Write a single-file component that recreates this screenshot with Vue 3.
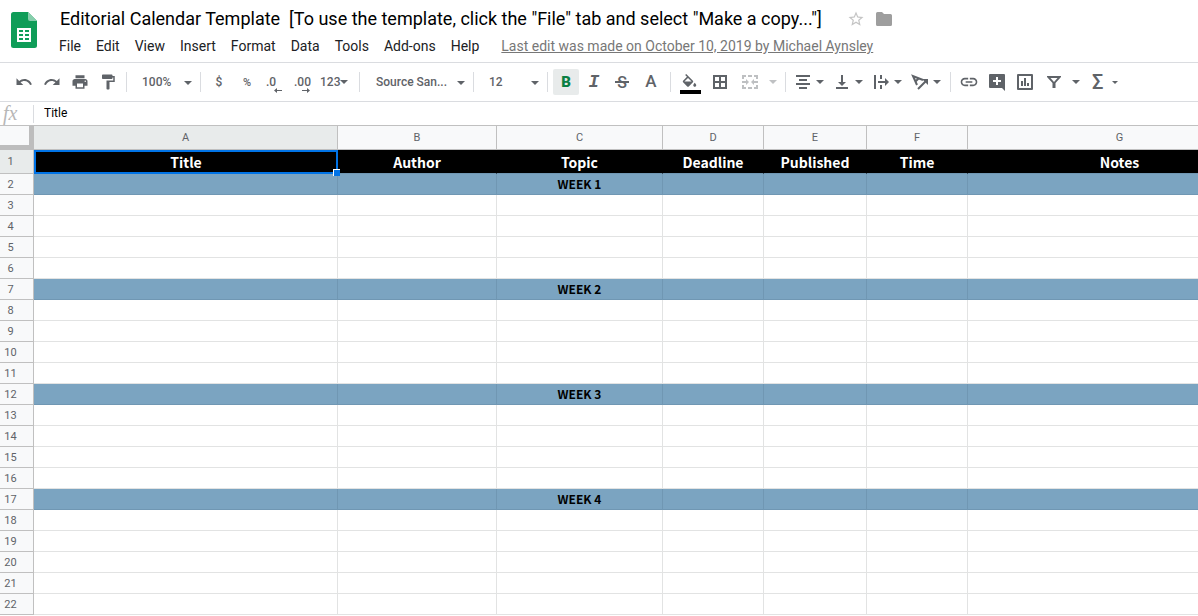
<script setup>
import { ref } from 'vue'

const formula = ref('Title')
const zoom = ref('100%')
const family = ref('Source San...')
const size = ref('12')

const menus = ['File', 'Edit', 'View', 'Insert', 'Format', 'Data', 'Tools', 'Add-ons', 'Help']

const history = [
  { label: 'Undo', path: 'M12.5 8c-2.65 0-5.05.99-6.9 2.6L2 7v9h9l-3.62-3.62c1.39-1.16 3.16-1.88 5.12-1.88 3.54 0 6.55 2.31 7.6 5.5l2.37-.78C21.08 11.03 17.15 8 12.5 8z' },
  { label: 'Redo', path: 'M18.4 10.6C16.55 8.99 14.15 8 11.5 8c-4.65 0-8.58 3.03-9.96 7.22L3.9 16c1.05-3.19 4.05-5.5 7.6-5.5 1.95 0 3.73.72 5.12 1.88L13 16h9V7l-3.6 3.6z' },
  { label: 'Print', path: 'M19 8H5c-1.66 0-3 1.34-3 3v6h4v4h12v-4h4v-6c0-1.66-1.34-3-3-3zm-3 11H8v-5h8v5zm3-7c-.55 0-1-.45-1-1s.45-1 1-1 1 .45 1 1-.45 1-1 1zm-1-9H6v4h12V3z' },
  { label: 'Paint format', path: 'M18 4V3c0-.55-.45-1-1-1H5c-.55 0-1 .45-1 1v4c0 .55.45 1 1 1h12c.55 0 1-.45 1-1V6h1v4h-9v11c0 .55.45 1 1 1h2c.55 0 1-.45 1-1v-9h7V4h-3z' },
]

const arrange = [
  { label: 'Horizontal align', path: 'M2 2h14v2H2zM5 6h8v2H5zM2 10h14v2H2zM5 14h8v2H5z' },
  { label: 'Vertical align', path: 'M3 14h12v2H3zM8 2h2v7h3l-4 4-4-4h3z' },
  { label: 'Text wrapping', path: 'M2 2h2v14H2zM8 2h2v4H8zM8 12h2v4H8zM6 8h7V5l4 4-4 4v-3H6z' },
]

const insert = [
  { label: 'Insert link', box: '0 0 24 24', size: 20, path: 'M3.9 12c0-1.71 1.39-3.1 3.1-3.1h4V7H7c-2.76 0-5 2.24-5 5s2.24 5 5 5h4v-1.9H7c-1.71 0-3.1-1.39-3.1-3.1zM8 13h8v-2H8v2zm9-6h-4v1.9h4c1.71 0 3.1 1.39 3.1 3.1s-1.39 3.1-3.1 3.1h-4V17h4c2.76 0 5-2.24 5-5s-2.24-5-5-5z' },
  { label: 'Insert comment', box: '0 0 18 18', size: 18, path: 'M2 1h14q1 0 1 1v16l-3-3H2q-1 0-1-1V2q0-1 1-1zM8 4v3H5v2h3v3h2V9h3V7h-3V4z' },
  { label: 'Insert chart', box: '0 0 18 18', size: 18, path: 'M2 1h14q1 0 1 1v14q0 1-1 1H2q-1 0-1-1V2q0-1 1-1zM3 3v12h12V3zM5 8h2v5H5zM8 5h2v8H8zM11 10h2v3h-2z' },
]

const columns = [
  { id: 'A', head: 'Title' },
  { id: 'B', head: 'Author' },
  { id: 'C', head: 'Topic' },
  { id: 'D', head: 'Deadline' },
  { id: 'E', head: 'Published' },
  { id: 'F', head: 'Time' },
  { id: 'G', head: 'Notes' },
]

const rows = Array.from({ length: 21 }, (_, i) => i + 2)
const isWeek = (n) => (n - 2) % 5 === 0 && n < 22
const cell = (n, id) => (id === 'C' && isWeek(n) ? `WEEK ${(n - 2) / 5 + 1}` : '')
</script>

<template>
  <div class="app">
    <header class="top">
      <svg class="logo" viewBox="0 0 26 36" aria-hidden="true">
        <path fill="#0f9d58" d="M2.500 0H17l9 9v24.500q0 2.500-2.500 2.500h-21Q0 36 0 33.500v-31Q0 0 2.500 0z" />
        <path fill="#87ceac" d="M17 0l9 9h-7q-2 0-2-2z" />
        <path fill="#fff" fill-rule="evenodd" d="M6 16h14v14H6zM8 18v2h4v-2zM14 18v2h4v-2zM8 22v2h4v-2zM14 22v2h4v-2zM8 26v2h4v-2zM14 26v2h4v-2z" />
      </svg>
      <div class="heading">
        <div class="title-row">
          <h1>Editorial Calendar Template&nbsp; [To use the template, click the "File" tab and select "Make a copy..."]</h1>
          <button class="plain star" aria-label="Star">
            <svg width="18" height="18" viewBox="0 0 24 24"><path fill="#c4c4c4" d="M22 9.240l-7.190-.62L12 2 9.190 8.630 2 9.240l5.460 4.730L5.820 21 12 17.270 18.180 21l-1.630-7.030L22 9.240zM12 15.400l-3.760 2.270 1-4.280-3.320-2.880 4.380-.38L12 6.100l1.710 4.040 4.380.38-3.320 2.880 1 4.280L12 15.400z" /></svg>
          </button>
          <button class="plain folder" aria-label="Move">
            <svg width="16" height="14" viewBox="0 0 16 14"><path fill="#9e9e9e" d="M1.500 0H6l2 2h6.500Q16 2 16 3.500v9q0 1.500-1.500 1.500h-13Q0 14 0 12.500v-11Q0 0 1.500 0z" /></svg>
          </button>
        </div>
        <nav class="menus">
          <button v-for="m in menus" :key="m" class="menu">{{ m }}</button>
          <a class="last-edit" href="#">Last edit was made on October 10, 2019 by Michael Aynsley</a>
        </nav>
      </div>
    </header>

    <div class="toolbar">
      <button v-for="t in history" :key="t.label" class="tool" :aria-label="t.label">
        <svg width="18" height="18" viewBox="0 0 24 24"><path :d="t.path" /></svg>
      </button>
      <span class="sep"></span>
      <label class="pick small-pick">
        <select v-model="zoom" aria-label="Zoom"><option>100%</option></select>
        <span class="caret"></span>
      </label>
      <span class="sep"></span>
      <button class="tool">$</button>
      <button class="tool percent">%</button>
      <button class="tool decimal" aria-label="Decrease decimal places">
        <span>.0</span>
        <svg width="8" height="5" viewBox="0 0 8 5"><path d="M3 0v2h5v1H3v2L0 2.500z" /></svg>
      </button>
      <button class="tool decimal" aria-label="Increase decimal places">
        <span>.00</span>
        <svg width="8" height="5" viewBox="0 0 8 5"><path d="M5 0v2H0v1h5v2l3-2.500z" /></svg>
      </button>
      <button class="tool formats">123<span class="caret"></span></button>
      <span class="sep"></span>
      <label class="pick font-pick">
        <select v-model="family" aria-label="Font"><option>Source San...</option></select>
        <span class="caret"></span>
      </label>
      <span class="sep"></span>
      <label class="pick small-pick">
        <select v-model="size" aria-label="Font size"><option>12</option></select>
        <span class="caret"></span>
      </label>
      <span class="sep"></span>
      <button class="tool bold" aria-label="Bold"><b>B</b></button>
      <button class="tool italic" aria-label="Italic"><i>I</i></button>
      <button class="tool strike" aria-label="Strikethrough"><span>S</span></button>
      <button class="tool wide color" aria-label="Text color">A</button>
      <span class="sep"></span>
      <button class="tool wide" aria-label="Fill color">
        <svg width="22" height="24" viewBox="0 0 22 24">
          <path transform="translate(1.500 4) scale(.75)" d="M16.560 8.940L7.620 0 6.210 1.410l2.380 2.380-5.150 5.150c-.59.59-.59 1.540 0 2.120l5.500 5.500c.29.29.68.44 1.060.44s.77-.15 1.060-.44l5.500-5.500c.59-.58.59-1.530 0-2.120zM5.210 10L10 5.210 14.790 10H5.210zM19 11.500s-2 2.170-2 3.500c0 1.100.9 2 2 2s2-.9 2-2c0-1.330-2-3.500-2-3.500z" />
          <path fill="#000" d="M1 20h21v4H1z" />
        </svg>
      </button>
      <button class="tool wide" aria-label="Borders">
        <svg width="18" height="18" viewBox="0 0 18 18"><path fill-rule="evenodd" d="M2 2h14v14H2zM4 4v4h4V4zM10 4v4h4V4zM4 10v4h4v-4zM10 10v4h4v-4z" /></svg>
      </button>
      <button class="tool wide off" aria-label="Merge cells">
        <svg width="18" height="18" viewBox="0 0 18 18"><path d="M1 2h4v2H3v2H1zM7 2h4v2H7zM13 2h4v4h-2V4h-2zM1 12h2v2h2v2H1zM7 14h4v2H7zM15 12h2v4h-4v-2h2zM1 8h4V6l3 3-3 3v-2H1zM17 8h-4V6l-3 3 3 3v-2h4z" /></svg>
      </button>
      <button class="arrow merge-arrow off" aria-label="Merge options"><span class="caret"></span></button>
      <span class="sep"></span>
      <button v-for="t in arrange" :key="t.label" class="tool combo" :aria-label="t.label">
        <svg width="18" height="18" viewBox="0 0 18 18"><path :d="t.path" /></svg>
        <span class="caret"></span>
      </button>
      <button class="tool combo" aria-label="Text rotation">
        <svg width="18" height="18" viewBox="0 0 18 18">
          <path fill="none" stroke="#5f6368" stroke-width="2" d="M6 12L2 3l10 4M5 8l3-3M7 16l8-8" />
          <path d="M11 6h6v6z" />
        </svg>
        <span class="caret"></span>
      </button>
      <span class="sep"></span>
      <button v-for="t in insert" :key="t.label" class="tool" :aria-label="t.label">
        <svg :width="t.size" :height="t.size" :viewBox="t.box"><path fill-rule="evenodd" :d="t.path" /></svg>
      </button>
      <button class="tool wide" aria-label="Filter">
        <svg width="18" height="18" viewBox="0 0 18 18"><path fill-rule="evenodd" d="M2 3h14v1l-5.500 6v5h-3v-5L2 4zM5.500 5L9 9l3.500-4z" /></svg>
      </button>
      <button class="arrow" aria-label="Filter views"><span class="caret"></span></button>
      <button class="tool wide sigma" aria-label="Functions">Σ<span class="caret tiny"></span></button>
    </div>

    <div class="formula-bar">
      <label class="fx" for="formula">fx</label>
      <input id="formula" v-model="formula" type="text">
    </div>

    <main class="sheet">
      <table>
        <colgroup>
          <col class="c-row">
          <col v-for="c in columns" :key="c.id" :class="'c-' + c.id">
        </colgroup>
        <thead>
          <tr class="letters">
            <td class="corner"></td>
            <th v-for="c in columns" :key="c.id" :class="{ active: c.id === 'A' }" scope="col">{{ c.id }}</th>
          </tr>
        </thead>
        <tbody>
          <tr class="heads">
            <th class="num active" scope="row">1</th>
            <td v-for="c in columns" :key="c.id" :class="{ selected: c.id === 'A' }">{{ c.head }}</td>
          </tr>
          <tr v-for="n in rows" :key="n" :class="{ week: isWeek(n) }">
            <th class="num" scope="row">{{ n }}</th>
            <td v-for="c in columns" :key="c.id">{{ cell(n, c.id) }}</td>
          </tr>
        </tbody>
      </table>
    </main>
  </div>
</template>

<style>
body {
  background: #fff;
  overflow: hidden;
}
</style>

<style scoped>
.app {
  display: flex;
  flex-direction: column;
  height: 100vh;
  overflow: hidden;
  font-family: Roboto, "Liberation Sans", sans-serif;
  color: #000;
}

button,
select,
input {
  margin: 0;
  padding: 0;
  border: 0;
  background: none;
  font: inherit;
  color: inherit;
}

.top {
  display: flex;
  gap: 15px;
  padding: 6px 11px 4px;
  border-bottom: 1px solid #dadce0;
}

.logo {
  flex: none;
  width: 26px;
  height: 36px;
  margin-top: 6px;
}

.heading {
  min-width: 0;
}

.title-row {
  display: flex;
  align-items: center;
  height: 26px;
  padding-left: 8px;
}

h1 {
  margin: 0;
  font-size: 18px;
  font-weight: 400;
  line-height: 26px;
  white-space: nowrap;
}

.plain {
  display: flex;
}

.star {
  margin-left: 25px;
}

.folder {
  margin-left: 11px;
}

.menus {
  display: flex;
  gap: 1px;
  align-items: center;
  height: 24px;
  margin-top: 2px;
  font-size: 14px;
  white-space: nowrap;
}

.menu {
  padding: 0 7px;
  line-height: 24px;
  color: #202124;
}

.last-edit {
  margin-left: 14px;
  color: #777;
}

.toolbar {
  display: flex;
  align-items: center;
  height: 38px;
  padding-left: 10px;
  border-bottom: 1px solid #dadce0;
  font-size: 12px;
  font-weight: 500;
  color: #5f6368;
  white-space: nowrap;
}

.tool {
  position: relative;
  display: flex;
  flex: none;
  align-items: center;
  justify-content: center;
  width: 28px;
  height: 26px;
}

.toolbar svg {
  display: block;
  flex: none;
  fill: #5f6368;
}

.toolbar .off {
  opacity: 0.4;
}

.wide {
  width: 30px;
}

.sep {
  flex: none;
  width: 1px;
  height: 20px;
  margin: 0 4px;
  background: #dadce0;
}

.caret {
  flex: none;
  width: 0;
  height: 0;
  border: 4px solid transparent;
  border-top-color: #5f6368;
  border-bottom-width: 0;
}

.tiny {
  border-width: 3px 3px 0;
}

.pick {
  position: relative;
  flex: none;
}

.pick select {
  width: 100%;
  height: 26px;
  padding-left: 11px;
  appearance: none;
  outline: 0;
}

.pick .caret {
  position: absolute;
  top: 12px;
  right: 4px;
}

.small-pick {
  width: 65px;
}

.font-pick {
  width: 105px;
}

.font-pick select {
  padding-left: 12px;
}

.percent {
  font-size: 11px;
}

.decimal {
  justify-content: flex-start;
  padding-left: 5px;
}

.decimal svg {
  position: absolute;
  right: 7px;
  bottom: 2px;
}

.formats {
  justify-content: flex-start;
  width: 38px;
  padding-left: 3px;
}

.bold b {
  display: flex;
  align-items: center;
  justify-content: center;
  width: 26px;
  height: 26px;
  border-radius: 2px;
  background: #e8ebeb;
  color: #0b8043;
  font-size: 15px;
  font-weight: 900;
}

.italic {
  font-family: "Liberation Mono", monospace;
  font-size: 18px;
  font-weight: 700;
}

.strike span {
  font-size: 16px;
}

.strike::after {
  content: "";
  position: absolute;
  top: 12px;
  left: 7px;
  width: 14px;
  height: 2px;
  background: #5f6368;
}

.color {
  padding-bottom: 2px;
  font-size: 17px;
}

.arrow {
  display: flex;
  align-items: center;
  justify-content: center;
  width: 14px;
  height: 26px;
}

.merge-arrow {
  width: 16px;
}

.combo {
  justify-content: flex-start;
  gap: 4px;
  width: 39px;
  padding-left: 4px;
}

.sigma {
  justify-content: flex-start;
  gap: 9px;
  width: 36px;
  padding-left: 9px;
  font-size: 20px;
}

.formula-bar {
  display: flex;
  align-items: center;
  height: 23px;
  border-bottom: 1px solid #c0c0c0;
}

.fx {
  box-sizing: border-box;
  width: 34px;
  height: 18px;
  padding-left: 3px;
  border-right: 1px solid #dadce0;
  color: #b7b7b7;
  font-family: "Liberation Serif", serif;
  font-size: 20px;
  font-style: italic;
  line-height: 16px;
}

.formula-bar input {
  flex: 1;
  padding: 0 0 2px 10px;
  font-size: 12px;
  outline: 0;
}

.sheet {
  flex: 1;
  min-height: 0;
  overflow: hidden;
}

table {
  width: 1272px;
  table-layout: fixed;
  border-collapse: separate;
  border-spacing: 0;
}

.c-row { width: 34px; }
.c-A { width: 304px; }
.c-B { width: 159px; }
.c-C { width: 166px; }
.c-D { width: 101px; }
.c-E { width: 103px; }
.c-F { width: 101px; }
.c-G { width: 304px; }

th,
td {
  box-sizing: border-box;
  height: 21px;
  padding: 0;
  border-right: 1px solid #e2e3e3;
  border-bottom: 1px solid #e2e3e3;
  line-height: 20px;
  text-align: center;
}

.letters td,
.letters th {
  height: 24px;
  border-color: #c0c0c0;
  background: #f8f9fa;
  color: #5f6368;
  font-size: 11px;
  font-weight: 400;
}

.letters .corner {
  border-right: 5px solid #bdbdbd;
  border-bottom: 5px solid #bdbdbd;
}

.num {
  padding: 2px 12px 0 0;
  border-color: #c0c0c0;
  background: #f8f9fa;
  color: #5f6368;
  font-size: 11px;
  font-weight: 400;
  line-height: 18px;
}

.letters .active,
.num.active {
  background: #e8ebeb;
}

.num.active {
  padding-top: 0;
}

.heads td,
.week td {
  font-family: "Noto Sans CJK SC", "Noto Sans", sans-serif;
  font-weight: 700;
}

.heads td {
  position: relative;
  height: 24px;
  border-right-color: #000;
  border-bottom-color: #7097b3;
  background: #000;
  color: #fff;
  font-size: 14px;
}

.heads .selected {
  border: 2px solid #0073e6;
  line-height: 18px;
}

.selected::after {
  content: "";
  position: absolute;
  right: -4px;
  bottom: -4px;
  z-index: 1;
  width: 6px;
  height: 6px;
  border: solid #fff;
  border-width: 1px 0 0 1px;
  background: #0073e6;
}

.week td {
  border-color: #7097b3;
  background: #7ba4c1;
  font-size: 12px;
}
</style>
